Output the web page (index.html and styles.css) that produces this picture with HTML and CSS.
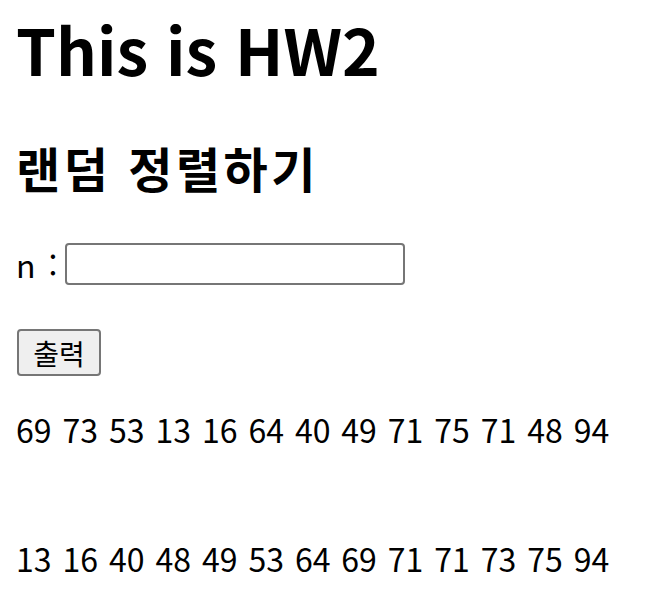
FILE: index.html
```html
<!DOCTYPE html>
<html lang="ko">
<head>
<meta charset="utf-8">
<title>HW2</title>
<link rel="stylesheet" href="styles.css">
</head>
<body>
<h1 class="title">This is HW2</h1>
<h2 class="subtitle">랜덤 정렬하기</h2>
<div class="row">
  <label class="label" for="n">n :</label>
  <input class="field" id="n" type="text">
</div>
<button class="btn" type="button">출력</button>
<p class="nums first">69 73 53 13 16 64 40 49 71 75 71 48 94</p>
<p class="nums second">13 16 40 48 49 53 64 69 71 71 73 75 94</p>
</body>
</html>
```
FILE: styles.css
```css
html, body {
  margin: 0;
  padding: 0;
  background: #ffffff;
}
body {
  padding: 16px 17px 0;
  font-family: "Noto Sans CJK KR", "Noto Sans", sans-serif;
  color: #000;
}
.title {
  margin: 0 0 0 -1px;
  font-size: 64px;
  line-height: 1;
  font-weight: 700;
}
.subtitle {
  margin: 63px 0 0 -1px;
  font-size: 48px;
  line-height: 1;
  font-weight: 700;
  letter-spacing: 3.5px;
}
.row {
  margin-top: 52px;
  display: flex;
  align-items: center;
  height: 42px;
}
.label {
  font-size: 32px;
  line-height: 1;
  margin-left: -1px;
  margin-right: 8px;
  word-spacing: 4px;
}
.field {
  box-sizing: border-box;
  width: 340px;
  height: 42px;
  border: 2px solid #767676;
  border-radius: 4px;
  margin: 0;
  padding: 0;
  background: #fff;
}
.btn {
  display: block;
  box-sizing: border-box;
  margin-top: 44px;
  width: 84px;
  height: 47px;
  border: 2px solid #767676;
  border-radius: 4px;
  background: #efefef;
  font-family: "Noto Sans CJK KR", sans-serif;
  font-size: 28px;
  line-height: 1;
  padding: 0;
  color: #000;
}
.nums {
  font-size: 32px;
  line-height: 1;
  margin: 0 0 0 -1px;
  word-spacing: 2px;
}
.first { margin-top: 37px; }
.second { margin-top: 97px; }
```
